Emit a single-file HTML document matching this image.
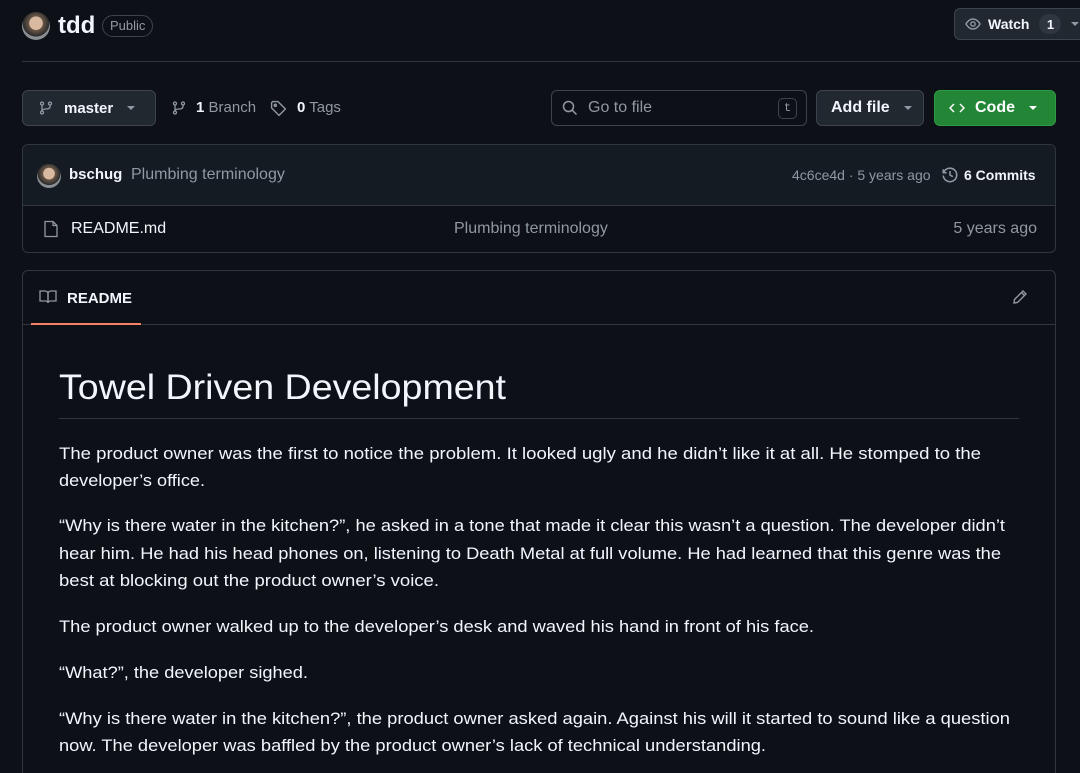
<!DOCTYPE html>
<html style="height:773px;overflow:hidden"><head><meta charset="utf-8"><style>
*{box-sizing:border-box;margin:0;padding:0}
body{width:1080px;height:773px;background:#0d1117;color:#e6edf3;font-family:"Liberation Sans",sans-serif;overflow:hidden;position:relative}
.a{position:absolute}
.btn{position:absolute;border:1px solid #3d444d;border-radius:6px;background:#212830;display:flex;align-items:center;font-size:15px;font-weight:bold;color:#f0f6fc}
.av{position:absolute;border-radius:50%;background:radial-gradient(circle at 50% 40%,#d9b9a0 0 30%,#6b5848 32%,#2b2b2b 60%,#8a8f94 62%);}
.caret{width:0;height:0;border-left:4px solid transparent;border-right:4px solid transparent;border-top:4px solid #9198a1;display:inline-block}
svg.t text{fill:#f0f6fc;font-family:"Liberation Sans",sans-serif}
</style></head><body>
<div class="av" style="left:22px;top:12px;width:28px;height:28px"></div>
<div class="a" style="left:58px;top:12px;font-size:24px;font-weight:bold;color:#f0f6fc">tdd</div>
<div class="a" style="left:102px;top:15px;height:22px;padding:0 7px;border:1px solid #3d444d;border-radius:11px;font-size:13px;color:#9198a1;line-height:20px">Public</div>
<div class="btn" style="left:954px;top:8px;width:140px;height:32px;padding-left:10px">
<svg width="16" height="16" viewBox="0 0 16 16" fill="none" stroke="#9198a1" stroke-width="1.4"><path d="M1 8c2-3.5 4.5-5 7-5s5 1.5 7 5c-2 3.5-4.5 5-7 5s-5-1.5-7-5z"/><circle cx="8" cy="8" r="2.2"/></svg>
<span style="margin-left:7px;font-size:14px">Watch</span>
<span style="margin-left:10px;background:#2f363f;border-radius:10px;width:22px;height:20px;display:inline-flex;align-items:center;justify-content:center;font-size:13px">1</span>
<span class="caret" style="margin-left:10px"></span></div>
<div class="a" style="left:22px;top:61px;width:1058px;height:1px;background:#30363d"></div>

<div class="btn" style="left:22px;top:90px;width:134px;height:36px;padding-left:15px">
<svg width="16" height="16" viewBox="0 0 16 16" fill="none" stroke="#9198a1" stroke-width="1.3"><circle cx="4" cy="3.5" r="1.5"/><circle cx="4" cy="12.5" r="1.5"/><circle cx="12" cy="3.5" r="1.5"/><path d="M4 5v6M12 5v1.5c0 2-2 2.5-4 2.5s-4 .5-4 2"/></svg>
<span style="margin-left:10px">master</span><span class="caret" style="margin-left:14px"></span></div>
<svg class="a" style="left:171px;top:100px" width="16" height="16" viewBox="0 0 16 16" fill="none" stroke="#9198a1" stroke-width="1.3"><circle cx="4" cy="3.5" r="1.5"/><circle cx="4" cy="12.5" r="1.5"/><circle cx="12" cy="3.5" r="1.5"/><path d="M4 5v6M12 5v1.5c0 2-2 2.5-4 2.5s-4 .5-4 2"/></svg>
<div class="a" style="left:196px;top:99px;font-size:15px;color:#9198a1"><b style="color:#f0f6fc">1</b> Branch</div>
<svg class="a" style="left:270px;top:100px" width="17" height="17" viewBox="0 0 16 16" fill="none" stroke="#9198a1" stroke-width="1.3"><path d="M1.5 2.5v5l7 7 6-6-7-7h-5z"/><circle cx="5" cy="5" r="1"/></svg>
<div class="a" style="left:297px;top:99px;font-size:15px;color:#9198a1"><b style="color:#f0f6fc">0</b> Tags</div>

<div class="a" style="left:551px;top:90px;width:256px;height:36px;border:1px solid #3d444d;border-radius:6px;background:#0d1117"></div>
<svg class="a" style="left:562px;top:100px" width="16" height="16" viewBox="0 0 16 16" fill="none" stroke="#9198a1" stroke-width="1.5"><circle cx="6.5" cy="6.5" r="5"/><path d="M10.2 10.2l4.3 4.3"/></svg>
<div class="a" style="left:588px;top:99px;font-size:16px;color:#9198a1">Go to file</div>
<div class="a" style="left:778px;top:98px;width:19px;height:21px;border:1px solid #3d444d;border-radius:5px;font-family:'Liberation Mono',monospace;font-size:12px;color:#9198a1;text-align:center;line-height:19px">t</div>
<div class="btn" style="left:816px;top:90px;width:108px;height:36px;padding-left:14px;font-size:16px">Add file<span class="caret" style="margin-left:14px"></span></div>
<div class="btn" style="left:934px;top:90px;width:122px;height:36px;padding-left:14px;font-size:16px;background:#238636;border-color:#2f9a44;color:#fff">
<svg width="16" height="16" viewBox="0 0 16 16" fill="none" stroke="#fff" stroke-width="1.5"><path d="M5 4L1 8l4 4M11 4l4 4-4 4"/></svg>
<span style="margin-left:10px">Code</span><span class="caret" style="margin-left:14px;border-top-color:#fff"></span></div>

<div class="a" style="left:22px;top:144px;width:1034px;height:109px;border:1px solid #30363d;border-radius:6px;overflow:hidden">
<div style="height:61px;background:#151b23;border-bottom:1px solid #30363d;position:relative">
<div class="av" style="left:14px;top:19px;width:24px;height:24px"></div>
<div class="a" style="left:46px;top:21px;font-size:15px;font-weight:bold;color:#f0f6fc">bschug</div>
<div class="a" style="left:108px;top:21px;font-size:16px;color:#9198a1">Plumbing terminology</div>
<div class="a" style="left:769px;top:22px;font-size:14px;color:#9198a1">4c6ce4d · 5 years ago</div>
<svg class="a" style="left:918px;top:21px" width="18" height="18" viewBox="0 0 16 16" fill="none" stroke="#9198a1" stroke-width="1.4"><path d="M2 3v3h3"/><path d="M2.3 6A6 6 0 1 1 2 8.5"/><path d="M8 4.5V8l2.5 1.5"/></svg>
<div class="a" style="left:941px;top:22px;font-size:14px;font-weight:bold;color:#f0f6fc">6 Commits</div>
</div>
<svg class="a" style="left:20px;top:75px" width="16" height="18" viewBox="0 0 16 18" fill="none" stroke="#9198a1" stroke-width="1.3"><path d="M2 1.5h8l4 4v11H2z"/><path d="M10 1.5v4h4"/></svg>
<div class="a" style="left:48px;top:75px;font-size:16px;color:#f0f6fc">README.md</div>
<div class="a" style="left:431px;top:75px;font-size:16px;color:#9198a1">Plumbing terminology</div>
<div class="a" style="right:18px;top:75px;font-size:16px;color:#9198a1">5 years ago</div>
</div>

<div class="a" style="left:22px;top:270px;width:1034px;height:503px;border:1px solid #30363d;border-bottom:none;border-radius:6px 6px 0 0"></div>
<div class="a" style="left:23px;top:324px;width:1032px;height:1px;background:#30363d"></div>
<div class="a" style="left:31px;top:323px;width:110px;height:2px;background:#f78166"></div>
<svg class="a" style="left:39px;top:289px" width="18" height="16" viewBox="0 0 18 16" fill="none" stroke="#9198a1" stroke-width="1.3"><path d="M1 2h5c1.5 0 3 1 3 2.5V14c0-1-1-2-2.5-2H1z"/><path d="M17 2h-5c-1.5 0-3 1-3 2.5V14c0-1 1-2 2.5-2H17z"/></svg>
<div class="a" style="left:67px;top:290px;font-size:15px;font-weight:bold;color:#f0f6fc">README</div>
<svg class="a" style="left:1012px;top:289px" width="16" height="16" viewBox="0 0 16 16" fill="none" stroke="#9198a1" stroke-width="1.4"><path d="M11 2l3 3-8.5 8.5L2 14l.5-3.5z"/><path d="M9.5 3.5l3 3"/></svg>

<div class="a" style="left:59px;top:418px;width:960px;height:1px;background:#30363d"></div>
<svg class="a t" style="left:0;top:0" width="1080" height="773">
<text x="59" y="399" font-size="35" textLength="447" lengthAdjust="spacingAndGlyphs" font-weight="500">Towel Driven Development</text>
<g font-size="17">
<text x="59" y="459" textLength="922" lengthAdjust="spacingAndGlyphs">The product owner was the first to notice the problem. It looked ugly and he didn’t like it at all. He stomped to the</text>
<text x="59" y="486" textLength="146" lengthAdjust="spacingAndGlyphs">developer’s office.</text>
<text x="59" y="531" textLength="946" lengthAdjust="spacingAndGlyphs">“Why is there water in the kitchen?”, he asked in a tone that made it clear this wasn’t a question. The developer didn’t</text>
<text x="59" y="559" textLength="942" lengthAdjust="spacingAndGlyphs">hear him. He had his head phones on, listening to Death Metal at full volume. He had learned that this genre was the</text>
<text x="59" y="586" textLength="380" lengthAdjust="spacingAndGlyphs">best at blocking out the product owner’s voice.</text>
<text x="59" y="632" textLength="755" lengthAdjust="spacingAndGlyphs">The product owner walked up to the developer’s desk and waved his hand in front of his face.</text>
<text x="59" y="678" textLength="249" lengthAdjust="spacingAndGlyphs">“What?”, the developer sighed.</text>
<text x="59" y="724" textLength="951" lengthAdjust="spacingAndGlyphs">“Why is there water in the kitchen?”, the product owner asked again. Against his will it started to sound like a question</text>
<text x="59" y="751" textLength="707" lengthAdjust="spacingAndGlyphs">now. The developer was baffled by the product owner’s lack of technical understanding.</text>
</g>
</svg>
</body></html>
